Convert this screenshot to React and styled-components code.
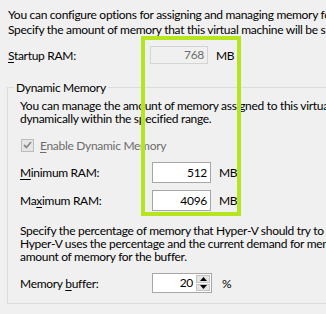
import styled, { createGlobalStyle } from "styled-components";

const GlobalStyle = createGlobalStyle`
  html, body {
    margin: 0;
    padding: 0;
    background: #f0f0f0;
  }
  body {
    font-family: Lato, "Liberation Sans", sans-serif;
    font-size: 12px;
    letter-spacing: -0.3px;
    color: #000;
  }
`;

const Page = styled.div`
  position: relative;
  width: 326px;
  height: 314px;
  overflow: hidden;
  padding: 7px 0 0 8px;
  box-sizing: border-box;
  white-space: nowrap;
`;

const Line = styled.div`
  line-height: ${(p) => p.$lh || 15}px;
  height: ${(p) => p.$lh || 15}px;
`;

const Row = styled.div`
  display: flex;
  align-items: center;
  height: ${(p) => p.$h}px;
  margin-top: ${(p) => p.$mt}px;
`;

const Label = styled.div`
  width: ${(p) => p.$w}px;
  flex: none;
`;

const Key = styled.span`
  text-decoration: underline;
  text-underline-offset: 2px;
`;

const NumberBox = styled.div`
  box-sizing: border-box;
  width: ${(p) => p.$w}px;
  height: ${(p) => p.$h}px;
  border: 1px solid ${(p) => (p.$disabled ? "#d4d4d4" : "#a6a6a6")};
  background: ${(p) => (p.$disabled ? "#f0f0f0" : "#fff")};
  color: ${(p) => (p.$disabled ? "#6d6d6d" : "#000")};
  text-align: right;
  padding-right: 3px;
  line-height: ${(p) => p.$h - 2}px;
  flex: none;
`;

const Unit = styled.div`
  margin-left: ${(p) => p.$gap}px;
`;

const Group = styled.fieldset`
  margin: 16px 0 0 -1px;
  width: 340px;
  border: 1px solid #dcdcdc;
  padding: 4px 0 10px 12px;
  box-sizing: border-box;
`;

const Legend = styled.legend`
  margin-left: -6px;
  padding: 0 2px;
  line-height: 15px;
`;

const CheckRow = styled.div`
  display: flex;
  align-items: center;
  height: 16px;
  margin-top: 12px;
  padding-left: 1px;
  color: #6d6d6d;
`;

const CheckBox = styled.div`
  width: 13px;
  height: 13px;
  box-sizing: border-box;
  border: 1px solid #bcbcbc;
  background: #e6e6e6;
  margin-right: 6px;
  display: flex;
  align-items: center;
  justify-content: center;
`;

const Spinner = styled.div`
  display: flex;
  box-sizing: border-box;
  width: 60px;
  height: 20px;
  border: 1px solid #a6a6a6;
  background: #fff;
`;

const SpinValue = styled.div`
  flex: 1;
  text-align: right;
  padding-right: 3px;
  line-height: 18px;
`;

const SpinButtons = styled.div`
  width: 15px;
  display: flex;
  flex-direction: column;
  gap: 1px;
  padding: 1px 1px 1px 0;
  box-sizing: border-box;
`;

const SpinButton = styled.div`
  flex: 1;
  background: #e5e5e5;
  border: 1px solid #c4c4c4;
  display: flex;
  align-items: center;
  justify-content: center;
`;

const Highlight = styled.div`
  position: absolute;
  left: 141px;
  top: 36px;
  width: 100px;
  height: 180px;
  box-sizing: border-box;
  border: 4px solid #b5e61d;
  pointer-events: none;
`;

function Arrow({ up }) {
  return (
    <svg width="7" height="4" viewBox="0 0 7 4">
      <polygon points={up ? "3.5,0 7,4 0,4" : "0,0 7,0 3.5,4"} fill="#000" />
    </svg>
  );
}

export default function App() {
  return (
    <>
      <GlobalStyle />
      <Page>
        <Line>You can configure options for assigning and managing memory for this virtual machine.</Line>
        <Line>Specify the amount of memory that this virtual machine will be started with.</Line>
        <Row $h={18} $mt={9}>
          <Label $w={142}>
            <Key>S</Key>tartup RAM:
          </Label>
          <NumberBox $w={58} $h={18} $disabled>
            768
          </NumberBox>
          <Unit $gap={8}>MB</Unit>
        </Row>

        <Group>
          <Legend>Dynamic Memory</Legend>
          <Line $lh={13}>You can manage the amount of memory assigned to this virtual machine</Line>
          <Line $lh={13}>dynamically within the specified range.</Line>
          <CheckRow>
            <CheckBox>
              <svg width="9" height="8" viewBox="0 0 9 8">
                <path d="M1 4 L3.5 6.5 L8 1" stroke="#8a8a8a" strokeWidth="1.8" fill="none" />
              </svg>
            </CheckBox>
            <span>
              <Key>E</Key>nable Dynamic Memory
            </span>
          </CheckRow>
          <Row $h={21} $mt={9}>
            <Label $w={132}>
              <Key>M</Key>inimum RAM:
            </Label>
            <NumberBox $w={59} $h={21}>512</NumberBox>
            <Unit $gap={8}>MB</Unit>
          </Row>
          <Row $h={21} $mt={7}>
            <Label $w={132}>
              Ma<Key>x</Key>imum RAM:
            </Label>
            <NumberBox $w={59} $h={21}>4096</NumberBox>
            <Unit $gap={8}>MB</Unit>
          </Row>
          <div style={{ marginTop: 13 }}>
            <Line $lh={13}>Specify the percentage of memory that Hyper-V should try to reserve as a buffer.</Line>
            <Line $lh={13}>Hyper-V uses the percentage and the current demand for memory to determine an</Line>
            <Line $lh={13}>amount of memory for the buffer.</Line>
          </div>
          <Row $h={20} $mt={10}>
            <Label $w={132}>
              Memory <Key>b</Key>uffer:
            </Label>
            <Spinner>
              <SpinValue>20</SpinValue>
              <SpinButtons>
                <SpinButton>
                  <Arrow up />
                </SpinButton>
                <SpinButton>
                  <Arrow />
                </SpinButton>
              </SpinButtons>
            </Spinner>
            <Unit $gap={10}>%</Unit>
          </Row>
        </Group>
        <Highlight />
      </Page>
    </>
  );
}
